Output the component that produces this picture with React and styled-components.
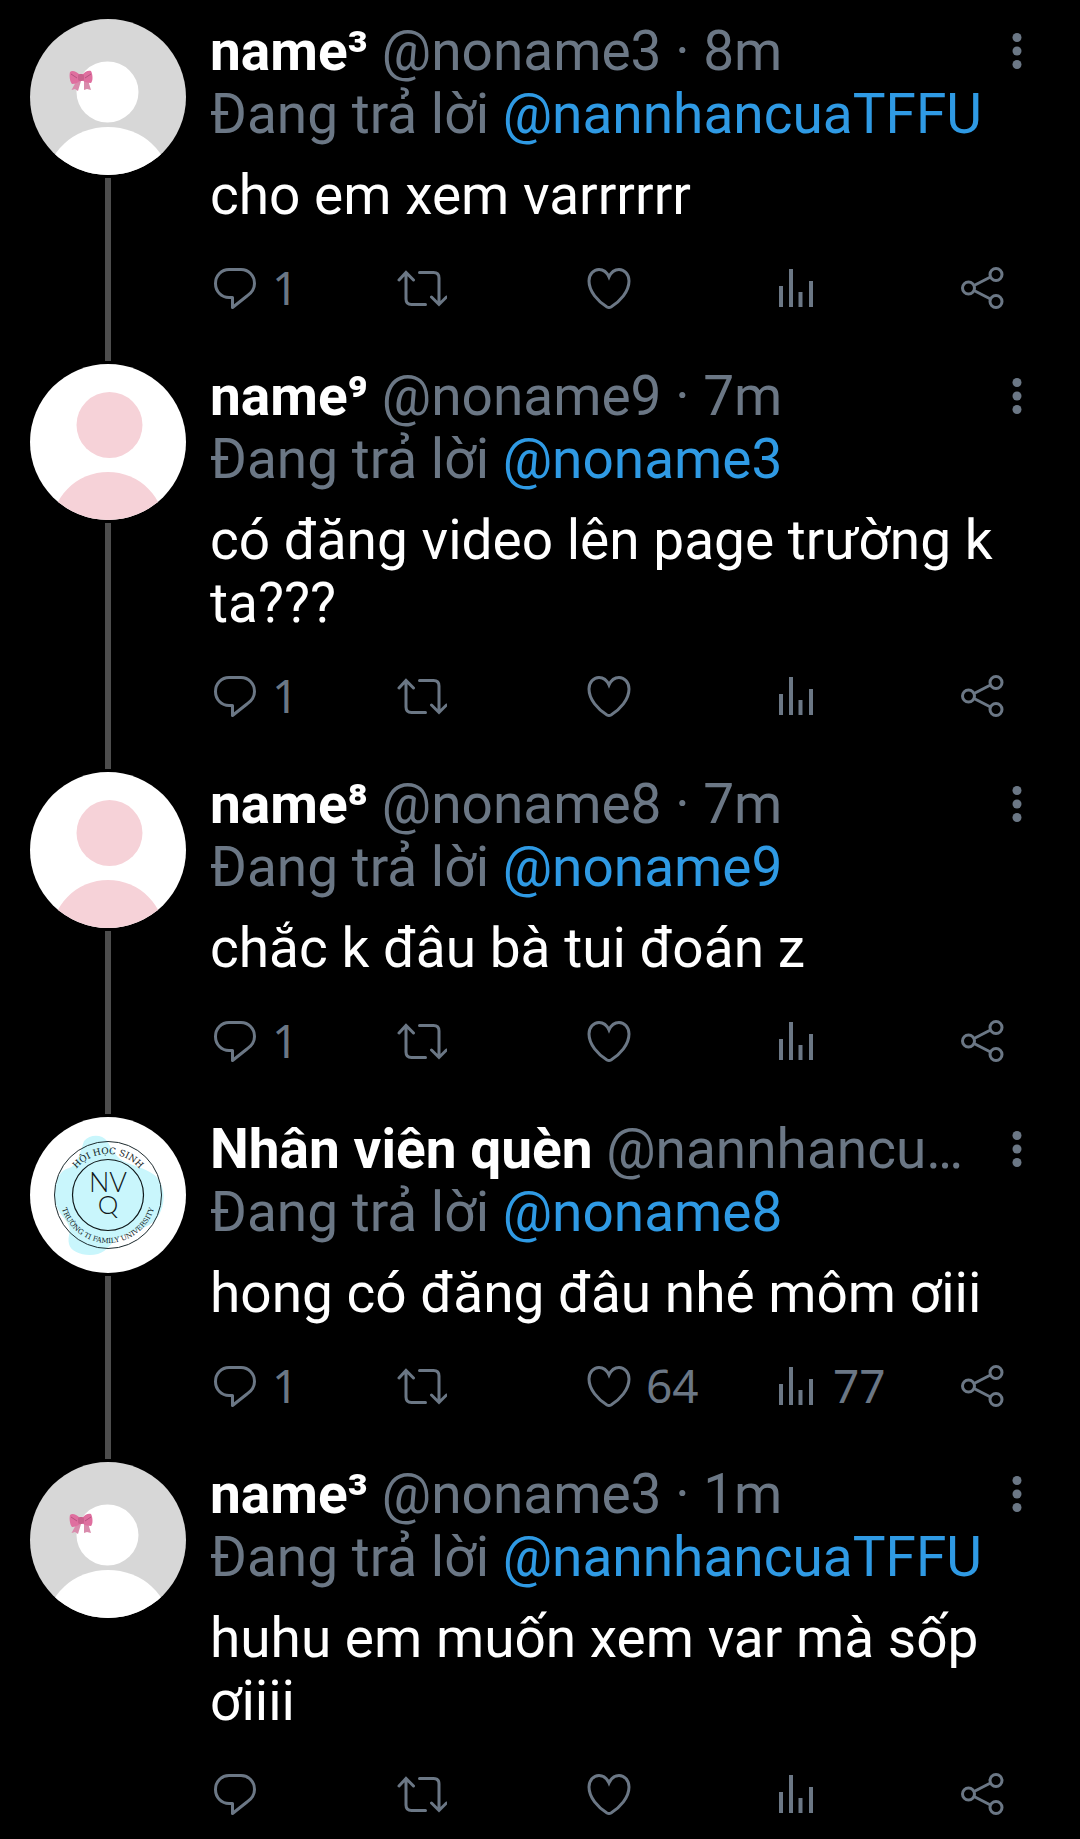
import React from 'react';
import styled, { createGlobalStyle } from 'styled-components';

const GlobalStyle = createGlobalStyle`
  body {
    margin: 0;
    background-color: #000;
    font-family: Roboto, sans-serif;
  }
`;

const Thread = styled.main`
  padding: 19px 30px 20px;
`;

const Tweet = styled.article`
  display: flex;
  gap: 24px;
`;

const Rail = styled.div`
  display: flex;
  flex-direction: column;
  flex: none;
  align-items: center;
  width: 156px;
`;

const AvatarSvg = styled.svg`
  display: block;
  width: 156px;
  height: 156px;
  border-radius: 50%;
`;

const ThreadLine = styled.div`
  flex: 1;
  width: 6px;
  margin: 3px 0;
  background-color: #4d4d4d;
`;

const Content = styled.div`
  flex: 1;
  min-width: 0;
  padding-top: 1px;
  padding-bottom: ${(props) => (props.$last ? '0' : '50px')};
  font-size: 55px;
  line-height: 63px;
`;

const Header = styled.header`
  display: flex;
  gap: 12px;
`;

const Author = styled.div`
  flex: 1;
  min-width: 0;
  overflow: hidden;
  white-space: nowrap;
  text-overflow: ellipsis;
  color: #6b7785;
`;

const Name = styled.span`
  font-weight: 700;
  color: #fff;
`;

const MoreButton = styled.button`
  display: flex;
  justify-content: center;
  align-items: center;
  width: 66px;
  height: 62px;
  padding: 0;
  border: none;
  background: none;
  color: #6b7785;
  cursor: pointer;
`;

const ReplyTo = styled.div`
  color: #6b7785;
`;

const Mention = styled.a`
  color: #2f9ae4;
  text-decoration: none;
`;

const Body = styled.p`
  margin: 18px 0 37px;
  color: #fff;
`;

const Actions = styled.div`
  display: flex;
  margin-right: 42px;
`;

const Action = styled.button`
  display: flex;
  flex: ${(props) => (props.$end ? 'none' : '1 1 0')};
  align-items: center;
  gap: 12px;
  height: 50px;
  padding: 0;
  border: none;
  background: none;
  color: #6b7785;
  cursor: pointer;
`;

const Count = styled.span`
  padding-bottom: 4px;
  font-family: 'Noto Sans', sans-serif;
  font-size: 46px;
  line-height: 50px;
`;

const Icon = styled.svg`
  display: block;
  flex: none;
  width: 50px;
  height: 50px;
  fill: none;
  stroke: currentColor;
  stroke-width: ${(props) => (props.$bold ? 4 : 3)};
`;

const ReplyIcon = () => (
  <Icon viewBox="0 0 50 50">
    <path d="M19 5.500h12c7.500 0 13.500 6 13.500 14 0 5.500-3 9.500-7.500 12.500L22.500 43.500V33.500H19C11.500 33.500 5.500 27.500 5.500 19.500S11.500 5.500 19 5.500z" strokeLinejoin="round" />
  </Icon>
);

const RetweetIcon = () => (
  <Icon viewBox="0 0 50 50" strokeLinecap="round">
    <path d="M2 16l7-7.500 7.500 7.500M9 9V35c0 3.500 2 5.500 5.500 5.500h14M22.500 8.500H36.500c3.500 0 5.500 2 5.500 5.500v26M34.500 33l7.500 7.500 7.500-7.500" />
  </Icon>
);

const LikeIcon = () => (
  <Icon viewBox="0 0 50 50">
    <path d="M25 13C23 8.500 19.500 5.500 15 5.500 9.500 5.500 5 10.500 5 17c0 10.500 9 20.500 18 26 1.500.8 2.500.8 4 0 9-5.500 18-15.500 18-26 0-6.500-4.500-11.500-10-11.500-4.500 0-8 3-10 7.500z" />
  </Icon>
);

const ViewsIcon = () => (
  <Icon viewBox="0 0 50 50" $bold>
    <path d="M10 22v21M20 5v38M29.500 28v15M40 17v26" />
  </Icon>
);

const ShareIcon = () => (
  <Icon viewBox="0 0 50 50">
    <circle cx="10.500" cy="24" r="6" />
    <circle cx="38" cy="10.500" r="6" />
    <circle cx="38" cy="37.500" r="6" />
    <path d="M16 21.500l16.500-8.500M16 26.500l16.500 8.500" />
  </Icon>
);

const MoreIcon = () => (
  <svg width="10" height="38" viewBox="0 0 10 38" fill="currentColor">
    <circle cx="5" cy="5.500" r="4.500" />
    <circle cx="5" cy="19" r="4.500" />
    <circle cx="5" cy="32.500" r="4.500" />
  </svg>
);

const BowAvatar = () => (
  <AvatarSvg viewBox="0 0 156 156">
    <rect width="156" height="156" fill="#d7d7d7" />
    <ellipse cx="77.500" cy="73" rx="31" ry="30.500" fill="#fff" />
    <ellipse cx="78" cy="165" rx="62" ry="57" fill="#fff" />
    <path d="M47 61l-5.500 10 3.500-1 3 2 3-10zM54 61l0 10 3-1 4 1-3-10z" fill="#d98bac" />
    <path d="M50 56c-4-4-8-5-10-3-1 4 0 10 2 12 4 0 7-2 9-4zM52 56c3-4 7-5 9-4 2 4 2 10 0 12-4 0-7-1-9-3z" fill="#df6f9f" />
    <path d="M41 55l6 4M61 55l-6 4" stroke="#b5527f" strokeWidth="1" />
    <rect x="48" y="55" width="6" height="7" rx="2" fill="#c9618d" />
  </AvatarSvg>
);

const PinkAvatar = () => (
  <AvatarSvg viewBox="0 0 156 156">
    <rect width="156" height="156" fill="#fff" />
    <circle cx="79.500" cy="61" r="33" fill="#f6d2d8" />
    <circle cx="78" cy="165" r="57" fill="#f6d2d8" />
  </AvatarSvg>
);

const LogoAvatar = () => (
  <AvatarSvg viewBox="0 0 156 156">
    <rect width="156" height="156" fill="#fff" />
    <path d="M54 24c6-7 18-7 23 0 4 6 7 14 16 20 10 5 22 7 30 13 13 9 14 32 3 45-8 10-24 12-36 18-8 4-12 14-22 17-12 3-27-1-29-10-2-8 3-13-1-20-4-8-14-14-13-30 0-12 4-24 14-26 8-2 12-18 15-27z" fill="#c9f6fc" />
    <circle cx="78" cy="78" r="53.500" fill="none" stroke="#1c2a2e" strokeWidth="1" />
    <circle cx="78" cy="78" r="35.500" fill="none" stroke="#10181a" strokeWidth="1.200" />
    <path id="logo-top" d="M37 78a41 41 0 0 1 82 0" fill="none" />
    <path id="logo-bottom" d="M30 78a48 48 0 0 0 96 0" fill="none" />
    <g fill="#10181a" fontFamily="'DejaVu Serif', serif" textAnchor="middle">
      <text fontSize="9">
        <textPath href="#logo-top" startOffset="50%">HỘI HỌC SINH</textPath>
      </text>
      <text fontSize="7">
        <textPath href="#logo-bottom" startOffset="50%">TRƯỜNG TI FAMILY UNIVERSITY</textPath>
      </text>
      <g fontFamily="Lato, sans-serif" fontWeight="300">
        <text x="78" y="75" fontSize="27">NV</text>
        <text x="78" y="97" fontSize="26">Q</text>
      </g>
    </g>
  </AvatarSvg>
);

const avatars = {
  bow: BowAvatar,
  pink: PinkAvatar,
  logo: LogoAvatar,
};

const tweets = [
  { avatar: 'bow', name: 'name³', handle: '@noname3', time: '8m', replyTo: '@nannhancuaTFFU', text: 'cho em xem varrrrrr', replies: 1 },
  { avatar: 'pink', name: 'name⁹', handle: '@noname9', time: '7m', replyTo: '@noname3', text: 'có đăng video lên page trường k ta???', replies: 1 },
  { avatar: 'pink', name: 'name⁸', handle: '@noname8', time: '7m', replyTo: '@noname9', text: 'chắc k đâu bà tui đoán z', replies: 1 },
  { avatar: 'logo', name: 'Nhân viên quèn', handle: '@nannhancuaTFFU', replyTo: '@noname8', text: 'hong có đăng đâu nhé môm ơiii', replies: 1, likes: 64, views: 77 },
  { avatar: 'bow', name: 'name³', handle: '@noname3', time: '1m', replyTo: '@nannhancuaTFFU', text: 'huhu em muốn xem var mà sốp ơiiii' },
];

const TweetRow = ({ tweet, last }) => {
  const Avatar = avatars[tweet.avatar];

  return (
    <Tweet>
      <Rail>
        <Avatar />
        {!last && <ThreadLine />}
      </Rail>
      <Content $last={last}>
        <Header>
          <Author>
            <Name>{tweet.name}</Name> {tweet.handle}
            {tweet.time && ` · ${tweet.time}`}
          </Author>
          <MoreButton aria-label="More">
            <MoreIcon />
          </MoreButton>
        </Header>
        <ReplyTo>
          Đang trả lời <Mention href="#">{tweet.replyTo}</Mention>
        </ReplyTo>
        <Body>{tweet.text}</Body>
        <Actions>
          <Action aria-label="Reply">
            <ReplyIcon />
            {tweet.replies && <Count>{tweet.replies}</Count>}
          </Action>
          <Action aria-label="Retweet">
            <RetweetIcon />
          </Action>
          <Action aria-label="Like">
            <LikeIcon />
            {tweet.likes && <Count>{tweet.likes}</Count>}
          </Action>
          <Action aria-label="Views">
            <ViewsIcon />
            {tweet.views && <Count>{tweet.views}</Count>}
          </Action>
          <Action aria-label="Share" $end>
            <ShareIcon />
          </Action>
        </Actions>
      </Content>
    </Tweet>
  );
};

const App = () => {
  return (
    <>
      <GlobalStyle />
      <Thread>
        {tweets.map((tweet, index) => (
          <TweetRow key={index} tweet={tweet} last={index === tweets.length - 1} />
        ))}
      </Thread>
    </>
  );
};

export default App;
